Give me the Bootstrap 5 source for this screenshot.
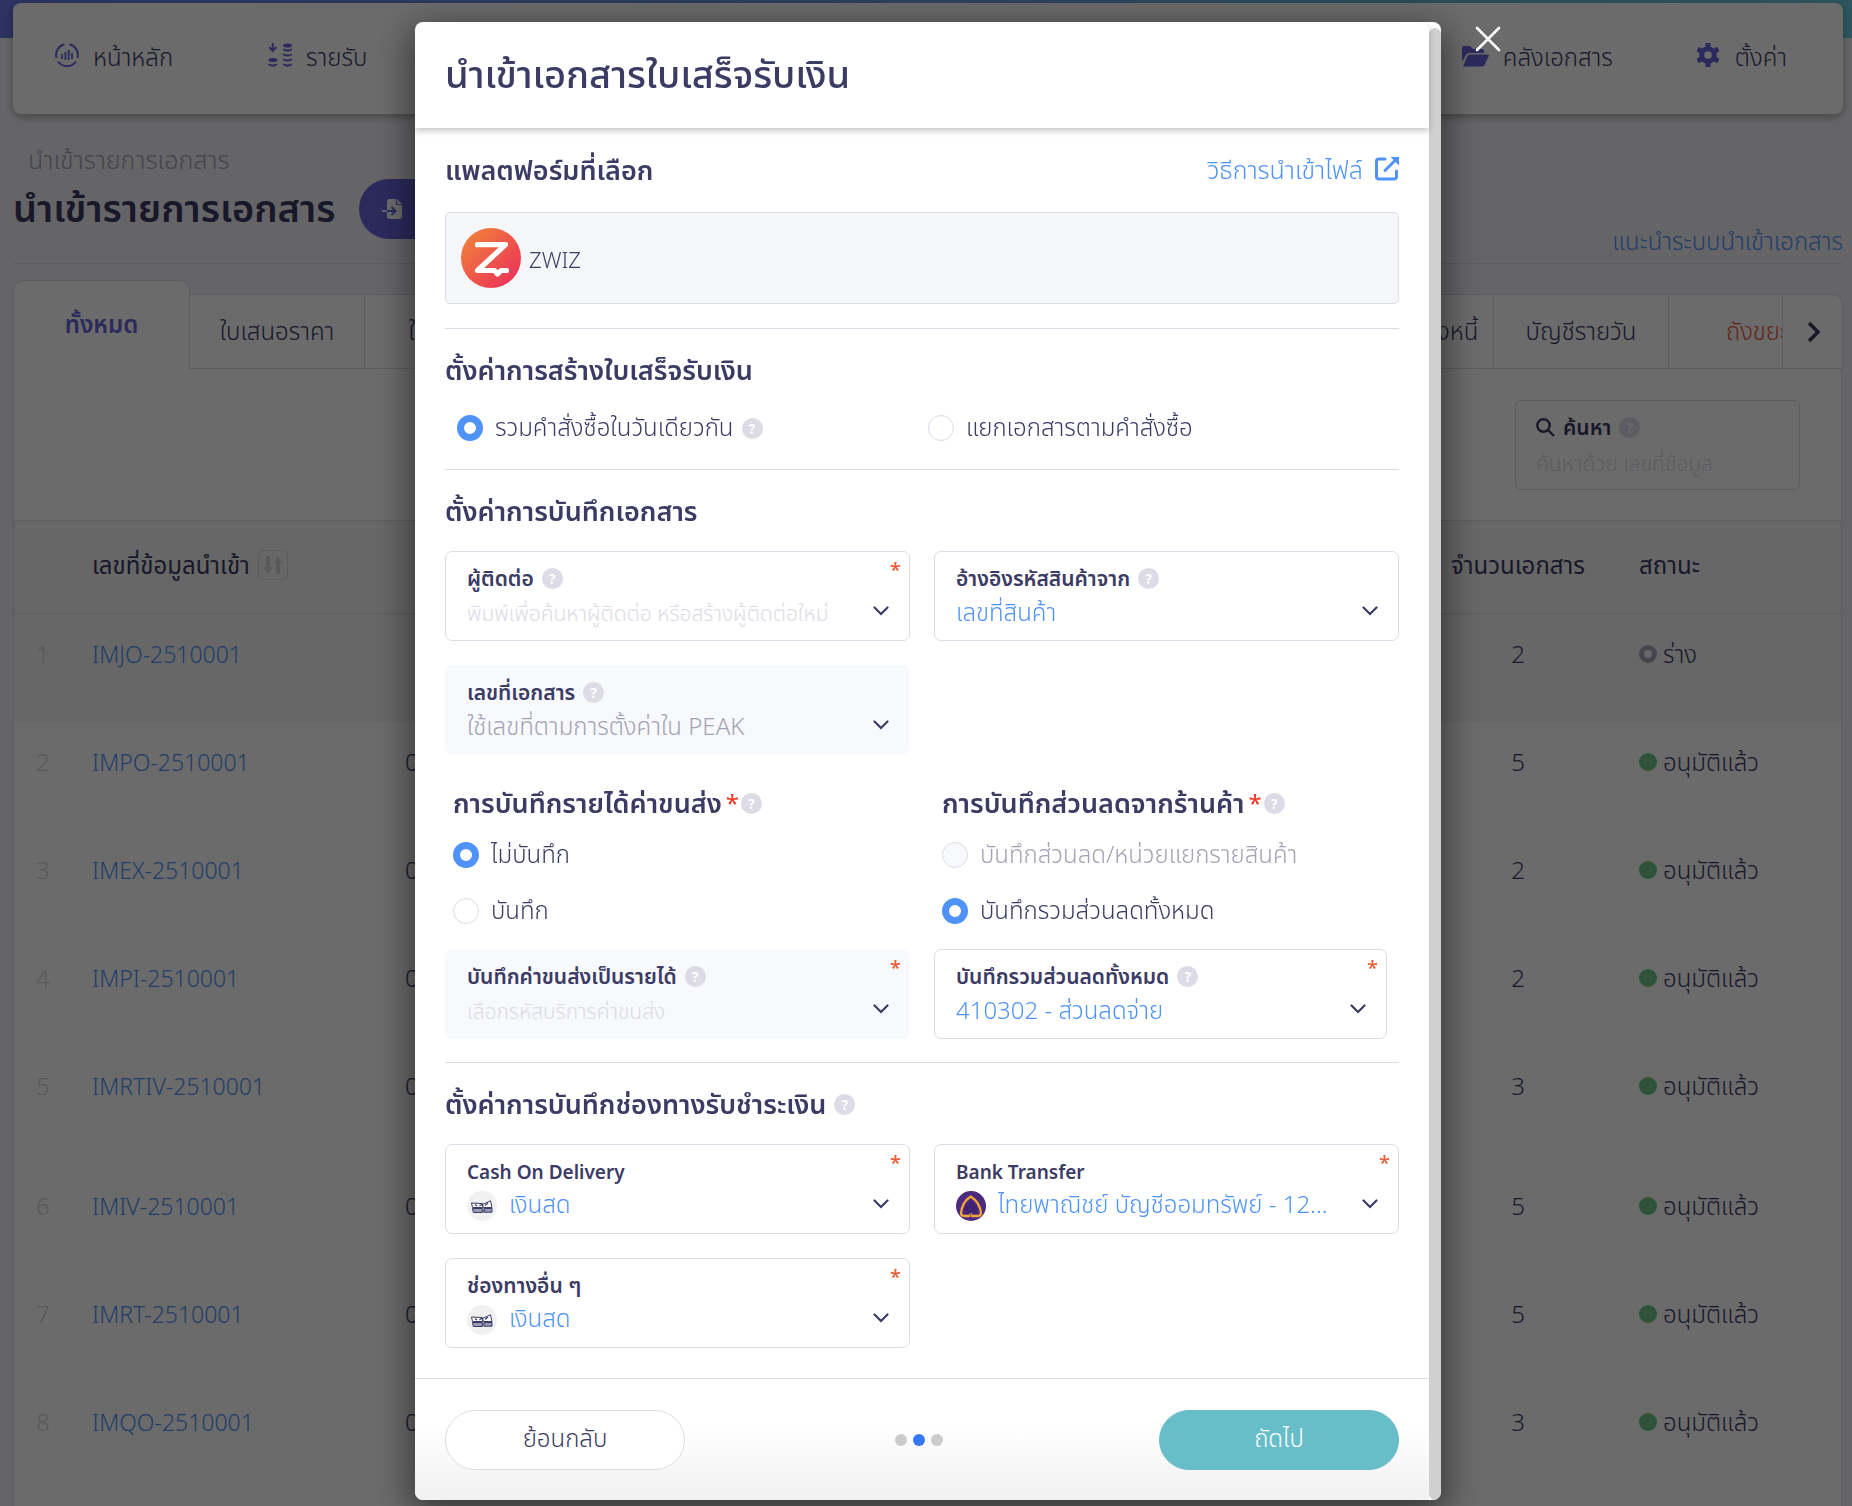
<!DOCTYPE html>
<html lang="th">
<head>
<meta charset="utf-8">
<meta name="viewport" content="width=device-width, initial-scale=1">
<title>นำเข้าเอกสารใบเสร็จรับเงิน</title>
<link href="https://cdn.jsdelivr.net/npm/bootstrap@5.3.0/dist/css/bootstrap.min.css" rel="stylesheet">
<style>
:root{--ink:#3b3b64;--line:#dcdbe6;--blue:#4f93f8;--violet:#6a64dc;--muted:#a3a2b5}
body{font-family:"Noto Sans","Noto Sans Thai",sans-serif;font-size:24px;font-weight:300;line-height:36px;color:var(--ink);background:#f1f1f6;overflow:hidden}
a{text-decoration:none;color:var(--blue)}
svg{flex:none;display:block}
.page{height:100vh;overflow:hidden;padding:0 9px 0 13px;background:linear-gradient(90deg,#6b78e8,#6ecde0) top/100% 38px no-repeat}
.topnav{margin-top:3px;height:111px;border-radius:8px;background:#fff;box-shadow:0 3px 8px rgba(0,0,0,.3);padding:34px 56px 0 42px}
.topnav a{color:var(--ink);line-height:40px;display:flex;gap:14px}
.topnav .first{width:213px}
.topnav .docs{width:235px}
.topnav .setup{gap:16px}
.topnav svg{color:var(--violet);margin-top:6px}
.crumb{color:var(--muted);padding-left:15px;margin-top:27px;font-size:25px}
.page-title{font-size:38px;font-weight:600;line-height:56px;margin:0}
.pill-violet{width:200px;height:60px;background:var(--violet);color:#fff;border-radius:30px;padding:0 0 0 22px}
.title-row{border-bottom:1px solid var(--line);height:85px;margin-top:2px}
.tabs-row{margin-top:16px;height:89px}
.tab-item{width:175px;height:75px;border:1px solid var(--line);border-left-width:0;background:#fff;color:var(--ink);line-height:72px;text-align:center;white-space:nowrap;overflow:hidden}
.tab-item.on{width:177px;height:89px;border-width:1px 1px 0;border-radius:10px 10px 0 0;color:var(--violet);font-weight:600;line-height:86px}
.tab-item.cut{width:114px;color:#ea5b36;text-align:left;padding-left:57px}
.tab-item.more{width:60px;border-radius:0 10px 0 0;padding:0 0 0 24px}
.panel{background:#fff;border:1px solid var(--line);border-top:0;min-height:100vh;margin:0 1px 0 0}
.search-box{width:285px;height:90px;border:1px solid var(--line);border-radius:6px;margin:31px 41px 30px 0;padding:9px 20px}
.search-box label{font-size:21px;font-weight:600;line-height:34px}
.grid-table{table-layout:fixed;width:100%}
.grid-table th{font-weight:400;background:#f5f5f6;border:1px solid var(--line);border-width:1px 0;height:93px;padding:0 20px 4px}
.grid-table td{height:108px;vertical-align:top;padding:22px 20px 0}
.grid-table td>a{font-size:23px}
.grid-table tr.tall td{height:120px}
.grid-table tr.picked td{background:#f5f5f6}
.grid-table .num{color:#d5d4da;padding-left:22px;padding-right:0}
.sort-btn{width:30px;height:30px;border:1px solid var(--line);border-radius:5px;background:none;color:#d5d4da;padding:0 3px}
.dot{width:18px;height:18px;border-radius:50%;background:#70c585;flex:none;margin-right:6px}
.dot.draft{background:none;border:5px solid var(--muted)}
.modal-backdrop.show{opacity:.58}
.modal{padding-left:4px}
.modal-dialog{max-width:1026px;margin:22px auto 6px}
.modal-content{flex-direction:row;border:0;border-radius:8px;box-shadow:0 10px 36px 4px rgba(0,0,0,.5);overflow:hidden;color:var(--ink)}
.scroll-rail{width:12px;padding-top:6px}
.scroll-rail div{height:100%;border-radius:6px;background:#d0d0d0}
.modal-header{height:106px;border:0;padding:0 30px 4px;box-shadow:0 3px 6px rgba(0,0,0,.22);position:relative}
.modal-title{font-size:38px;font-weight:500;line-height:60px}
.modal-body{padding:0 30px 7px}
.part{padding:23px 0}
.part:first-child{padding:24px 0}
.part+.part{border-top:1px solid var(--line)}
.part-title{font-size:27px;font-weight:600;line-height:36px;margin:0 0 22px}
.part:first-child .part-title{margin-bottom:24px}
.how-to{line-height:34px;font-size:25px}
.platform{height:92px;border:1px solid var(--line);border-radius:5px;background:#f4f6f8;padding:0 15px;gap:8px;font-size:22px}
.platform span{padding-top:2px}
.qm{width:21px;height:21px;border-radius:50%;background:#dcdbe6;color:#fff;font:700 14px/21px "Noto Sans",sans-serif;text-align:center;flex:none}
.two-col{display:grid;grid-template-columns:1fr 1fr;gap:24px}
.costs{margin-top:30px}
.pick{display:flex;align-items:center;gap:8px;margin:0;padding:0}
.pick label{line-height:34px;padding-bottom:2px}
.pick .form-check-input{width:26px;height:26px;margin:0 4px 0 0;float:none;border:1px solid var(--line);background:#fff;flex:none}
.pick .form-check-input:checked{border:7px solid var(--blue);background:#fff}
.pick .form-check-input:disabled{background:#f8f9fd;opacity:1}
.pick .form-check-input:disabled~label{opacity:1;color:var(--muted)}
.sub-title{font-size:27px;font-weight:600;line-height:36px;margin:0;padding-left:8px}
.req{color:#f0321e;font-size:24px;font-weight:400;margin:0 2px 0 4px}
.field{position:relative;height:90px;border:1px solid var(--line);border-radius:7px;background:#fff;padding:10px 21px 8px}
.field.off{background:#f8f9fd;border-color:#f8f9fd}
.field .lab{font-size:21px;font-weight:600;line-height:32px;height:32px}
.field .lab.latin{font-size:19px;line-height:34px}
.field select,.field input{appearance:none;border:0;background:none;padding:0;height:34px;line-height:34px;width:100%;font-size:24px;font-weight:300;color:var(--blue);opacity:1;outline:0}
.field input,.field .faint{font-size:21px;color:#dcdbe6}
.field input::placeholder,.search-box input::placeholder{color:#dcdbe6;opacity:1}
.field .ghost{color:var(--muted)}
.field .star{position:absolute;right:8px;top:6px;color:#ea5b36;font-size:20px;font-weight:500;line-height:24px}
.field .chev{position:absolute;right:20px;top:54px;pointer-events:none}
.field.narrow{margin-right:12px}
.search-box input{border:0;background:none;padding:0;width:100%;height:32px;font-size:21px;font-weight:300}
.modal-footer{height:122px;border-top:1px solid var(--line);padding:0 30px;border-radius:0;background:linear-gradient(#fff 40%,#f1f1f1)}
.modal-footer>*{margin:0}
.modal-footer .steps{gap:6px;margin-right:6px}
.wide-btn{width:240px;height:60px;border-radius:30px;font-size:24px;font-weight:300;line-height:36px;padding:0 0 4px;border:1px solid var(--line);background:#fff;color:var(--ink)}
.wide-btn.next{background:#67bdc8;border-color:#67bdc8;color:#fff}
.step{width:12px;height:12px;border-radius:50%;background:#ccc}
.step.on{background:#3478f6}
.close-x{position:fixed;left:calc(50% + 549px);top:26px;z-index:1060;background:none;border:0;padding:0}
</style>
</head>
<body>
<svg width="0" height="0" class="position-absolute" aria-hidden="true">
<symbol id="chev" viewBox="0 0 16 10"><path d="M1.5 1.5 8 8l6.500-6.500" fill="none" stroke="#3b3b64" stroke-width="2.200" stroke-linecap="round"/></symbol>
<symbol id="cash" viewBox="0 0 30 30"><circle cx="15" cy="15" r="15" fill="#f1f1f2"/><path d="M5 12.500l10 .5 9-3.500 1 12-19 .500z" fill="#fff"/><path d="M5 17.500h20v4H6.500z" fill="#9b9ab6"/><path d="M4.500 12l1 4.500h10v-4zM5.500 17.500l.8 4h9v-4zM17 17.500h8v3.700h-8zM16.500 16.500l-1-3 8-3.700 1.500 6.700z" fill="none" stroke="#3b3b64" stroke-width="1"/><path d="M8 13.500l2 1.500M12.500 15l2.500-2M18 14.500l3-2.500" fill="none" stroke="#3b3b64" stroke-width="1.200"/></symbol>
<symbol id="scb" viewBox="0 0 30 30"><circle cx="15" cy="15" r="15" fill="#4b2a80"/><path d="M13.600 25H9Q5.200 25.200 5 22.500C5.500 16 8.500 9.500 14.700 5.500 21 9.500 24.500 16 25 22.500Q24.800 25.200 21 25h-5.200" fill="none" stroke="#f2a735" stroke-width="2.300"/><path d="M14.700 8.500c-1.500 3-6.500 7-6.500 11.300 0 3.500 4.200 4 5.700 1.500h1.700c1.500 2.500 5.700 2 5.700-1.500 0-4.300-5-8.300-6.600-11.300z" fill="#3f2273"/><path d="M13.800 22.500V26M15.700 22.500V26" stroke="#f2a735" stroke-width="1.200"/></symbol>
</svg>

<div class="page">
  <nav class="topnav d-flex justify-content-between align-items-start">
    <div class="d-flex">
      <a href="#" class="first"><svg width="24" height="24" viewBox="0 0 24 24" fill="none" stroke="currentColor" stroke-width="2"><path d="M9.500 1.300A11 11 0 0 0 1.500 15M14.500 1.300A11 11 0 0 1 22.500 15M3 18.500a11 11 0 0 0 18 0"/><path d="M7 11v5M10.400 9v8M13.700 7v10M17 10v6" stroke-width="1.800"/></svg>หน้าหลัก</a>
      <a href="#"><svg width="24" height="24" viewBox="0 0 24 24" fill="currentColor"><path d="M3.800 0h2v5l2-1.500 1.200 1.300L4.800 9.500.5 4.800l1.300-1.300 2 1.500z"/><ellipse cx="4.800" cy="17" rx="4.500" ry="2"/><path d="M.3 20.500q4.500 2 9 0v1.500q-4.500 3.500-9 0zM15 5.500q4.500 2 9 0V7q-4.500 3-9 0zM15 10.500q4.500 2 9 0V12q-4.500 3-9 0zM15 15.500q4.500 2 9 0v1.500q-4.500 3-9 0zM15 20.500q4.500 2 9 0V22q-4.500 3.500-9 0z"/><ellipse cx="19.500" cy="2.500" rx="4.500" ry="2"/></svg>รายรับ</a>
    </div>
    <div class="d-flex">
      <a href="#" class="docs"><svg width="27" height="24" viewBox="0 0 27 24" fill="currentColor"><path d="M0 19V5q0-2 2-2h6l3 3h9q2 0 2 2v2H7q-2 0-3 2z"/><path d="M1 23.500 5.500 13q.7-1.500 2-1.500H26q1.300 0 .7 1.500L22.500 22q-.7 1.500-2 1.500z"/></svg>คลังเอกสาร</a>
      <a href="#" class="setup"><svg width="22" height="24" viewBox="0 0 22 24" fill="none" stroke="currentColor"><circle cx="11" cy="12" r="6.300" stroke-width="5"/><path d="M11 0v5M11 19v5M.6 6l4.400 2.500M17 15.500l4.400 2.500M21.400 6 17 8.500M5 15.500.6 18" stroke-width="5"/></svg>ตั้งค่า</a>
    </div>
  </nav>

  <div class="crumb">นำเข้ารายการเอกสาร</div>
  <div class="title-row d-flex gap-4">
    <h1 class="page-title">นำเข้ารายการเอกสาร</h1>
    <button class="pill-violet btn d-flex align-items-center" aria-label="นำเข้าเอกสาร"><svg width="20" height="20" viewBox="0 0 20 20"><path d="M7 0h7v6h6v11q0 3-3 3H8q-3 0-3-3V3q0-3 2-3z" fill="#fff"/><path d="M15 0l5 5h-5z" fill="#fff"/><path d="M0 12h13M9.500 8l4 4-4 4" fill="none" stroke="#6a64dc" stroke-width="2"/><path d="M0 12h5" stroke="#fff" stroke-width="1.800"/></svg></button>
    <a href="#" class="ms-auto align-self-end mb-1">แนะนำระบบนำเข้าเอกสาร</a>
  </div>

  <div class="tabs-row d-flex align-items-end">
    <a href="#" class="tab-item on">ทั้งหมด</a>
    <a href="#" class="tab-item">ใบเสนอราคา</a>
    <a href="#" class="tab-item">ใบแจ้งหนี้</a>
    <div class="ms-auto d-flex">
      <a href="#" class="tab-item">บันทึกใบแจ้งหนี้</a>
      <a href="#" class="tab-item">บัญชีรายวัน</a>
      <a href="#" class="tab-item cut">ถังขยะ</a>
      <button class="tab-item more" aria-label="ถัดไป"><svg width="14" height="22" viewBox="0 0 14 22"><path d="M2 2l9 9-9 9" fill="none" stroke="#3b3b64" stroke-width="3.500"/></svg></button>
    </div>
  </div>

  <div class="panel">
    <div class="d-flex justify-content-end">
      <div class="search-box">
        <label for="q" class="d-flex align-items-center"><svg width="19" height="19" viewBox="0 0 19 19" fill="none" stroke="#3b3b64" stroke-width="2.400"><circle cx="7.500" cy="7.500" r="6.200"/><path d="m12 12 6 6"/></svg><span class="ms-2 me-2">ค้นหา</span><span class="qm">?</span></label>
        <input id="q" type="text" placeholder="ค้นหาด้วย เลขที่ข้อมูล">
      </div>
    </div>
    <table class="grid-table">
      <colgroup><col style="width:58px"><col style="width:313px"><col><col style="width:202px"><col style="width:222px"></colgroup>
      <thead><tr><th></th><th><div class="d-flex align-items-center gap-2">เลขที่ข้อมูลนำเข้า<button class="sort-btn" aria-label="เรียงลำดับ"><svg width="22" height="20" viewBox="0 0 22 20" fill="currentColor"><path d="M4 1h4v11h3l-5 6-5-6h3zM14 19V8h-3l5-6 5 6h-3v11z"/></svg></button></div></th><th></th><th class="text-center px-0">จำนวนเอกสาร</th><th>สถานะ</th></tr></thead>
      <tbody>
        <tr class="picked"><td class="num">1</td><td><a href="#">IMJO-2510001</a></td><td></td><td class="text-center">2</td><td><div class="d-flex align-items-center"><span class="dot draft"></span>ร่าง</div></td></tr>
        <tr><td class="num">2</td><td><a href="#">IMPO-2510001</a></td><td>0</td><td class="text-center">5</td><td><div class="d-flex align-items-center"><span class="dot"></span>อนุมัติแล้ว</div></td></tr>
        <tr><td class="num">3</td><td><a href="#">IMEX-2510001</a></td><td>0</td><td class="text-center">2</td><td><div class="d-flex align-items-center"><span class="dot"></span>อนุมัติแล้ว</div></td></tr>
        <tr><td class="num">4</td><td><a href="#">IMPI-2510001</a></td><td>0</td><td class="text-center">2</td><td><div class="d-flex align-items-center"><span class="dot"></span>อนุมัติแล้ว</div></td></tr>
        <tr class="tall"><td class="num">5</td><td><a href="#">IMRTIV-2510001</a></td><td>0</td><td class="text-center">3</td><td><div class="d-flex align-items-center"><span class="dot"></span>อนุมัติแล้ว</div></td></tr>
        <tr><td class="num">6</td><td><a href="#">IMIV-2510001</a></td><td>0</td><td class="text-center">5</td><td><div class="d-flex align-items-center"><span class="dot"></span>อนุมัติแล้ว</div></td></tr>
        <tr><td class="num">7</td><td><a href="#">IMRT-2510001</a></td><td>0</td><td class="text-center">5</td><td><div class="d-flex align-items-center"><span class="dot"></span>อนุมัติแล้ว</div></td></tr>
        <tr><td class="num">8</td><td><a href="#">IMQO-2510001</a></td><td>0</td><td class="text-center">3</td><td><div class="d-flex align-items-center"><span class="dot"></span>อนุมัติแล้ว</div></td></tr>
      </tbody>
    </table>
  </div>
</div>

<div class="modal-backdrop show"></div>
<div class="modal d-block" tabindex="-1" role="dialog" aria-labelledby="dlg-title">
  <div class="modal-dialog">
    <div class="modal-content">
      <div class="flex-grow-1">
        <div class="modal-header"><h2 class="modal-title" id="dlg-title">นำเข้าเอกสารใบเสร็จรับเงิน</h2></div>
        <div class="modal-body">
          <section class="part">
            <div class="d-flex justify-content-between">
              <h3 class="part-title">แพลตฟอร์มที่เลือก</h3>
              <a href="#" class="how-to d-flex gap-2">วิธีการนำเข้าไฟล์<svg class="mt-1 ms-1" width="24" height="25" viewBox="0 0 24 25" fill="none" stroke="currentColor" stroke-width="3"><path d="M10 3H4q-2.500 0-2.500 2.500v15Q1.500 23 4 23h15q2.500 0 2.500-2.500V15" stroke-linecap="round"/><path d="M10 14.500 20 4.500" stroke-linecap="round"/><path d="M15.500 1H24v8.500z" fill="currentColor" stroke="none"/></svg></a>
            </div>
            <div class="platform d-flex align-items-center"><svg width="60" height="60" viewBox="0 0 60 60"><defs><linearGradient id="zg" x1="0" y1="0" x2="1" y2="1"><stop offset=".1" stop-color="#ef7f3b"/><stop offset=".9" stop-color="#ec3358"/></linearGradient></defs><circle cx="30" cy="30" r="30" fill="url(#zg)"/><path d="M16.500 16.700h28L16.500 42.500h17l3 3.500 3.500-3.500h5.500" fill="none" stroke="#fff" stroke-width="5.200" stroke-linejoin="round" stroke-linecap="round"/></svg><span>ZWIZ</span></div>
          </section>

          <section class="part">
            <h3 class="part-title">ตั้งค่าการสร้างใบเสร็จรับเงิน</h3>
            <div class="row g-0 ps-2 ms-1">
              <div class="col-6 pick"><input class="form-check-input" type="radio" name="mk" id="mk1" checked><label for="mk1">รวมคำสั่งซื้อในวันเดียวกัน</label><span class="qm">?</span></div>
              <div class="col-6 pick"><input class="form-check-input" type="radio" name="mk" id="mk2"><label for="mk2">แยกเอกสารตามคำสั่งซื้อ</label></div>
            </div>
          </section>

          <section class="part">
            <h3 class="part-title">ตั้งค่าการบันทึกเอกสาร</h3>
            <div class="two-col">
              <div class="field"><div class="lab d-flex align-items-center gap-2"><label for="f1">ผู้ติดต่อ</label><span class="qm">?</span></div><input id="f1" type="text" placeholder="พิมพ์เพื่อค้นหาผู้ติดต่อ หรือสร้างผู้ติดต่อใหม่"><span class="star">*</span><svg class="chev" width="16" height="10"><use href="#chev"/></svg></div>
              <div class="field"><div class="lab d-flex align-items-center gap-2"><label for="f2">อ้างอิงรหัสสินค้าจาก</label><span class="qm">?</span></div><select id="f2"><option>เลขที่สินค้า</option></select><svg class="chev" width="16" height="10"><use href="#chev"/></svg></div>
              <div class="field off"><div class="lab d-flex align-items-center gap-2"><label for="f3">เลขที่เอกสาร</label><span class="qm">?</span></div><select id="f3" class="ghost" disabled><option>ใช้เลขที่ตามการตั้งค่าใน PEAK</option></select><svg class="chev" width="16" height="10"><use href="#chev"/></svg></div>
            </div>
            <div class="two-col costs">
              <div>
                <h4 class="sub-title d-flex align-items-center">การบันทึกรายได้ค่าขนส่ง<span class="req">*</span><span class="qm">?</span></h4>
                <div class="pick ps-2 mt-3"><input class="form-check-input" type="radio" name="sh" id="sh1" checked><label for="sh1">ไม่บันทึก</label></div>
                <div class="pick ps-2 my-3 py-1"><input class="form-check-input" type="radio" name="sh" id="sh2"><label for="sh2">บันทึก</label></div>
                <div class="field off"><div class="lab d-flex align-items-center gap-2"><label for="f4">บันทึกค่าขนส่งเป็นรายได้</label><span class="qm">?</span></div><select id="f4" class="faint" disabled><option>เลือกรหัสบริการค่าขนส่ง</option></select><span class="star">*</span><svg class="chev" width="16" height="10"><use href="#chev"/></svg></div>
              </div>
              <div>
                <h4 class="sub-title d-flex align-items-center">การบันทึกส่วนลดจากร้านค้า<span class="req">*</span><span class="qm">?</span></h4>
                <div class="pick ps-2 mt-3"><input class="form-check-input" type="radio" name="ds" id="ds1" disabled><label for="ds1">บันทึกส่วนลด/หน่วยแยกรายสินค้า</label></div>
                <div class="pick ps-2 my-3 py-1"><input class="form-check-input" type="radio" name="ds" id="ds2" checked><label for="ds2">บันทึกรวมส่วนลดทั้งหมด</label></div>
                <div class="field narrow"><div class="lab d-flex align-items-center gap-2"><label for="f5">บันทึกรวมส่วนลดทั้งหมด</label><span class="qm">?</span></div><select id="f5"><option>410302 - ส่วนลดจ่าย</option></select><span class="star">*</span><svg class="chev" width="16" height="10"><use href="#chev"/></svg></div>
              </div>
            </div>
          </section>

          <section class="part">
            <h3 class="part-title d-flex align-items-center gap-2">ตั้งค่าการบันทึกช่องทางรับชำระเงิน<span class="qm">?</span></h3>
            <div class="two-col">
              <div class="field"><div class="lab latin"><label for="f6">Cash On Delivery</label></div><div class="d-flex align-items-center gap-2"><svg class="mt-1" width="30" height="30"><use href="#cash"/></svg><select id="f6" class="ms-1"><option>เงินสด</option></select></div><span class="star">*</span><svg class="chev" width="16" height="10"><use href="#chev"/></svg></div>
              <div class="field"><div class="lab latin"><label for="f7">Bank Transfer</label></div><div class="d-flex align-items-center gap-2"><svg class="mt-1" width="30" height="30"><use href="#scb"/></svg><select id="f7" class="ms-1"><option>ไทยพาณิชย์ บัญชีออมทรัพย์ - 12...</option></select></div><span class="star">*</span><svg class="chev" width="16" height="10"><use href="#chev"/></svg></div>
              <div class="field"><div class="lab"><label for="f8">ช่องทางอื่น ๆ</label></div><div class="d-flex align-items-center gap-2"><svg class="mt-1" width="30" height="30"><use href="#cash"/></svg><select id="f8" class="ms-1"><option>เงินสด</option></select></div><span class="star">*</span><svg class="chev" width="16" height="10"><use href="#chev"/></svg></div>
            </div>
          </section>
        </div>
        <div class="modal-footer d-flex justify-content-between align-items-center">
          <button type="button" class="wide-btn">ย้อนกลับ</button>
          <div class="steps d-flex"><span class="step"></span><span class="step on"></span><span class="step"></span></div>
          <button type="button" class="wide-btn next">ถัดไป</button>
        </div>
      </div>
      <div class="scroll-rail"><div></div></div>
    </div>
  </div>
</div>
<button type="button" class="close-x" aria-label="ปิด"><svg width="26" height="26" viewBox="0 0 26 26"><path d="M2 2l22 22M24 2 2 24" stroke="#fff" stroke-width="2.600" stroke-linecap="round"/></svg></button>
<script src="https://cdn.jsdelivr.net/npm/bootstrap@5.3.0/dist/js/bootstrap.bundle.min.js"></script>
</body>
</html>
